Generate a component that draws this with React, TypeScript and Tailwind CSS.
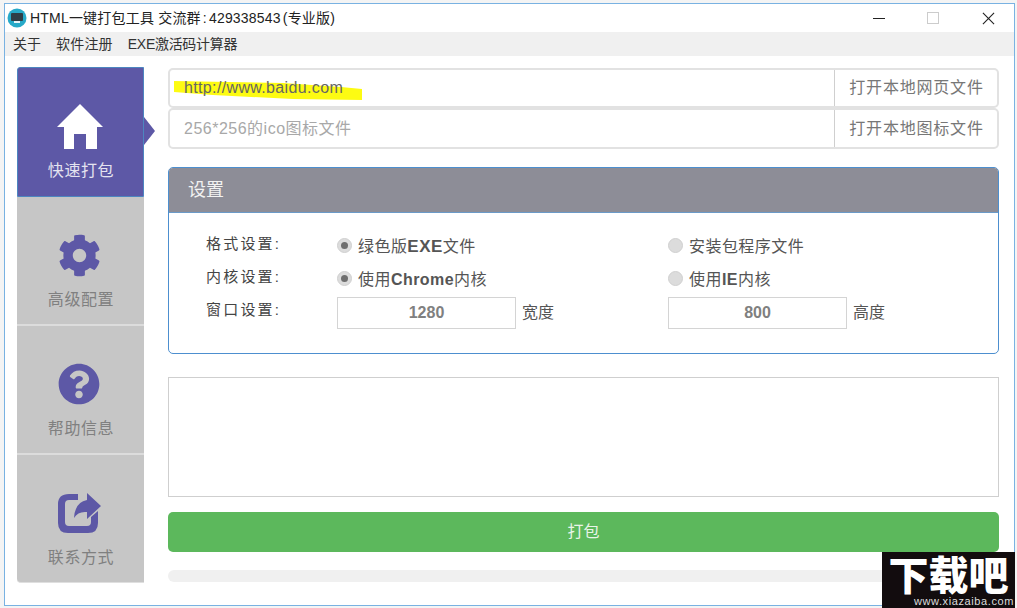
import React from "react";
import { FaCog, FaQuestionCircle } from "react-icons/fa";

const sans = "font-['Liberation_Sans','Noto_Sans_CJK_SC',sans-serif]";

function Home() {
  return (
    <svg width="46" height="45" viewBox="0 0 46 45" fill="#fff">
      <path d="M23 0 L46 23 L40 23 L40 45 L29 45 L29 30 L17 30 L17 45 L7 45 L7 23 L0 23 Z" />
    </svg>
  );
}

function Share() {
  return (
    <svg width="43" height="40" viewBox="0 0 43 40" fill="#5d58a6">
      <path d="M11 1 H20 L20 7 H11 Q7 7 7 11 V29 Q7 33 11 33 H29 Q33 33 33 29 V24 L40 18 V30 Q40 40 30 40 H10 Q0 40 0 30 V11 Q0 1 11 1 Z" />
      <path d="M29 0 L43 13 L29 26 V19 Q20 18 16 25 Q17 9 29 7 Z" />
    </svg>
  );
}

function Tab({ icon, label, active, h }: { icon: React.ReactNode; label: string; active?: boolean; h: string }) {
  return (
    <div className={`${h} relative flex flex-col items-center shrink-0 ${active ? "bg-[#5d58a6] text-[#e4e3f0] border border-[#4d86c0] rounded-tl-[3px]" : "bg-[#c6c6c6] text-[#808080]"}`}>
      <div className={`h-[46px] mt-[35px] flex items-center justify-center ${active ? "pr-[1px]" : "pr-[3px]"}`}>{icon}</div>
      <div className="mt-[11px] pl-[1px] text-[16px] leading-[22px] tracking-[0.6px]">{label}</div>
      {active && (
        <div className="absolute left-[126px] top-[49px] w-0 h-0 border-y-[14px] border-y-transparent border-l-[11px] border-l-[#5d58a6]" />
      )}
    </div>
  );
}

function InputRow({ text, btn, muted, cls }: { text: React.ReactNode; btn: string; muted?: boolean; cls: string }) {
  return (
    <div className={`${cls} flex border-2 border-[#e2e2e2] rounded-[5px] bg-white`}>
      <div className={`relative flex-1 flex items-center pl-[14px] text-[16px] ${muted ? "text-[#a8a8a8] tracking-[0.5px]" : "text-[#666] tracking-[0.35px]"}`}>{text}</div>
      <div className="w-[163px] border-l border-[#cfcfcf] flex items-center justify-center pl-[1px] text-[16px] text-[#777] tracking-[0.8px]">{btn}</div>
    </div>
  );
}

function Radio({ on }: { on?: boolean }) {
  return (
    <span className="w-[15px] h-[15px] rounded-full border border-[#d0d0d0] bg-[#dcdcdc] flex items-center justify-center shrink-0 -mt-[4px]">
      {on && <span className="w-[7px] h-[7px] rounded-full bg-[#6e6e6e]" />}
    </span>
  );
}

function Option({ on, children }: { on?: boolean; children: React.ReactNode }) {
  return (
    <div className="flex items-center gap-[6px] text-[16px] text-[#555] h-[33px] pt-[5px]">
      <Radio on={on} />
      <span className="tracking-[0.45px]">{children}</span>
    </div>
  );
}

export default function App() {
  return (
    <div className={`${sans} relative w-[1017px] h-[608px] overflow-hidden bg-[#f4f4f4] pt-[3px] pl-[4px] pr-[2px] pb-[2px]`}>
      <div className="w-full h-full bg-white border border-[#79b2e2] flex flex-col">
        <div className="h-[28px] flex items-center pl-[2px] shrink-0">
          <svg width="20" height="20" viewBox="0 0 20 20" className="shrink-0 mr-[3px]">
            <circle cx="10" cy="10" r="9.5" fill="#27a9c8" />
            <rect x="4" y="5" width="12" height="8" rx="1" fill="#2f3d46" />
            <rect x="7" y="13" width="6" height="2" fill="#e8f4f8" />
          </svg>
          <span className="text-[14px] text-[#222] tracking-[0.2px]">
            HTML一键打包工具 交流群<span className="px-[2px]">:</span>429338543<span className="px-[2px]">(专业版)</span>
          </span>
          <div className="ml-auto flex items-center">
            <span className="w-[12px] h-[1px] bg-[#222] mr-[42px]" />
            <span className="w-[12px] h-[12px] border border-[#ccc] mr-[43px]" />
            <svg width="13" height="13" viewBox="0 0 14 14" className="mr-[19px]" stroke="#222" strokeWidth="1.2">
              <path d="M1 1 L13 13 M13 1 L1 13" />
            </svg>
          </div>
        </div>
        <div className="h-[24px] bg-[#f0f0f0] flex items-center gap-[15px] pl-[8px] text-[14px] text-[#333] shrink-0">
          <span>关于</span>
          <span className="tracking-[0.2px]">软件注册</span>
          <span className="tracking-[-0.3px]">EXE激活码计算器</span>
        </div>
        <div className="flex-1 flex pl-[12px] pr-[15px] pt-[11px]">
          <div className="w-[127px] shrink-0 flex flex-col h-[516px]">
            <Tab active h="h-[130px]" icon={<Home />} label="快速打包" />
            <Tab h="h-[129px] border-b-2 border-[#dcdcdc]" icon={<FaCog size={43} color="#5d58a6" />} label="高级配置" />
            <Tab h="h-[129px] border-b-2 border-[#dcdcdc]" icon={<FaQuestionCircle size={42} color="#5d58a6" />} label="帮助信息" />
            <Tab h="h-[128px] rounded-bl-[4px] border-b border-[#dfdfdf]" icon={<Share />} label="联系方式" />
          </div>
          <div className="flex-1 ml-[24px] flex flex-col">
            <div className="pt-[1px]">
              <InputRow
                cls="h-[40px]"
                text={
                  <>
                    <svg width="190" height="22" viewBox="0 0 190 22" className="absolute left-[3px] top-[10px]">
                      <path d="M1 1 L110 3 L168 7 L189 9 L189 20 L120 19 L40 15 L1 12 Z" fill="#fdfb12" />
                    </svg>
                    <span className="relative">http://www.baidu.com</span>
                  </>
                }
                btn="打开本地网页文件"
              />
              <InputRow cls="h-[41px]" muted text="256*256的ico图标文件" btn="打开本地图标文件" />
            </div>
            <div className="mt-[18px] h-[187px] border border-[#4d8fcf] rounded-[5px] flex flex-col overflow-hidden">
              <div className="h-[45px] shrink-0 bg-[#8d8d97] flex items-center pl-[19px] text-[18px] text-[#f2f2f2] border-b border-[#6b9ac8]">设置</div>
              <div className="flex pl-[37px] pt-[15px]">
                <div className="w-[131px] text-[15px] text-[#444] tracking-[2.2px]">
                  <div className="h-[33px] flex items-center">格式设置:</div>
                  <div className="h-[33px] flex items-center">内核设置:</div>
                  <div className="h-[32px] flex items-center">窗口设置:</div>
                </div>
                <div className="w-[331px]">
                  <Option on>绿色版<b className="text-[17px]">EXE</b>文件</Option>
                  <Option on>使用<b>Chrome</b>内核</Option>
                  <div className="flex items-center gap-[6px] text-[16px] text-[#555] mt-[3px]">
                    <div className="w-[179px] h-[32px] border border-[#d4d4d4] flex items-center justify-center font-bold text-[#808080]">1280</div>
                    <span>宽度</span>
                  </div>
                </div>
                <div>
                  <Option>安装包程序文件</Option>
                  <Option>使用<b>IE</b>内核</Option>
                  <div className="flex items-center gap-[6px] text-[16px] text-[#555] mt-[3px]">
                    <div className="w-[179px] h-[32px] border border-[#d4d4d4] flex items-center justify-center font-bold text-[#808080]">800</div>
                    <span>高度</span>
                  </div>
                </div>
              </div>
            </div>
            <div className="mt-[23px] h-[120px] border border-[#cfcfcf] shrink-0" />
            <div className="mt-[15px] h-[40px] bg-[#5cb85c] rounded-[5px] flex items-center justify-center text-[16px] text-[#e8f4e8] shrink-0">打包</div>
            <div className="mt-[18px] h-[12px] bg-[#f0f0f0] rounded-[6px] shrink-0" />
          </div>
        </div>
      </div>
      <div className="absolute left-[882px] top-[552px] w-[133px] h-[56px] bg-[#120c0e] text-white flex flex-col items-center">
        <div className="text-[40px] leading-[43px] h-[43px] font-black whitespace-nowrap font-['Noto_Sans_CJK_SC',sans-serif]">下载吧</div>
        <div className="text-[11px] leading-[12px] text-[#ddd] tracking-[0.6px] whitespace-nowrap self-end pr-[1px]">www.xiazaiba.com</div>
      </div>
    </div>
  );
}
